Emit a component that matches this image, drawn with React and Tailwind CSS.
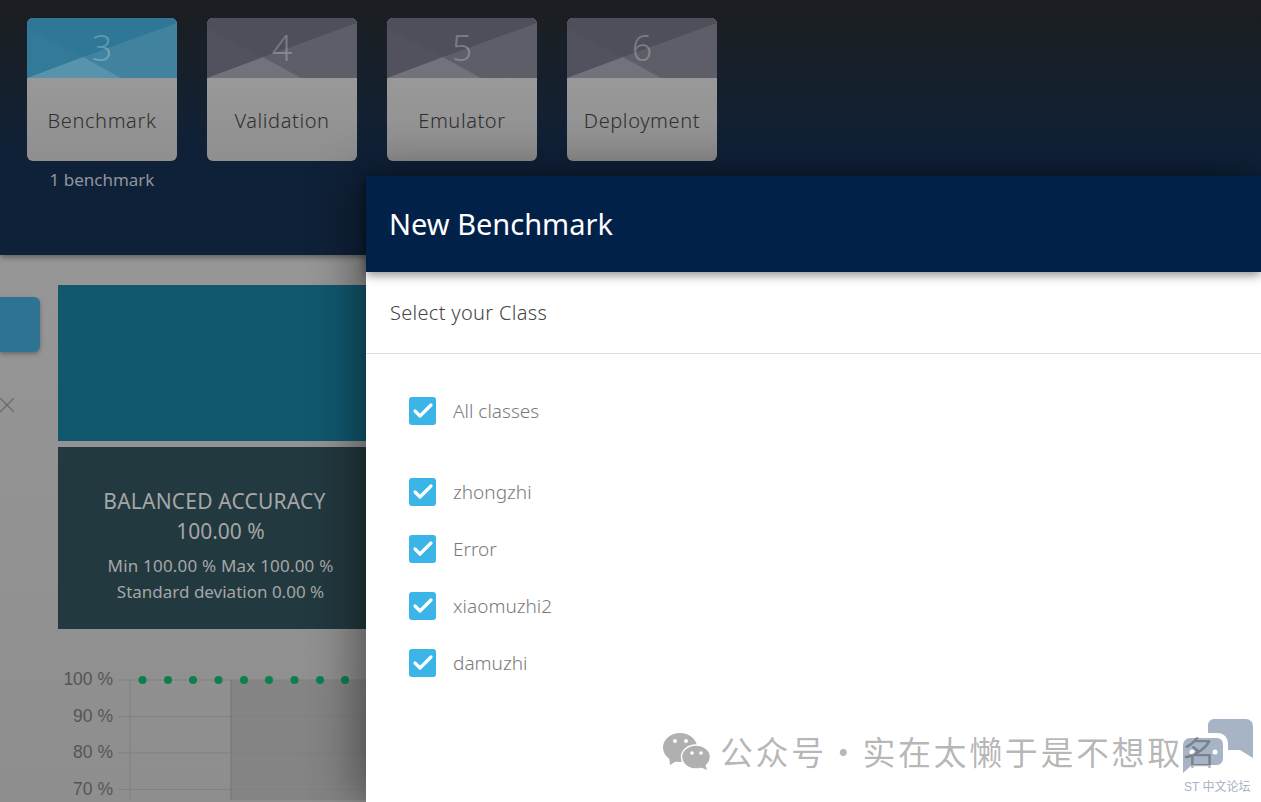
import React from "react";
import { Check, X } from "lucide-react";

const steps = [
  { n: 3, label: "Benchmark", sub: "1 benchmark", active: true },
  { n: 4, label: "Validation" },
  { n: 5, label: "Emulator" },
  { n: 6, label: "Deployment" },
];
const classes = ["zhongzhi", "Error", "xiaomuzhi2", "damuzhi"];
const yTicks = [
  { label: "100 %", y: 680 },
  { label: "90 %", y: 716.5 },
  { label: "80 %", y: 753 },
  { label: "70 %", y: 789.5 },
];
const dots = [142.5, 168, 193, 218.5, 244, 269, 294.5, 320, 345];

const StepCard = ({ step }) => (
  <div className="w-[150px]">
    <div className="h-[143px] rounded-md overflow-hidden bg-gradient-to-b from-[#a0a0a0] to-[#8f8f8f]">
      <div className={`relative h-[60px] ${step.active ? "bg-[#2f7796]" : "bg-[#4e4f5a]"}`}>
        <svg className="absolute inset-0" width="150" height="60" viewBox="0 0 150 60">
          <polygon points="0,10 56,39 0,60" fill="#fff" fillOpacity="0.02" />
          <polygon points="150,5 56,39 94,60 150,60" fill="#fff" fillOpacity="0.09" />
          <polygon points="0,60 56,39 94,60" fill="#fff" fillOpacity="0.2" />
        </svg>
        <div className="relative text-center text-[36px] leading-[60px] font-light text-white/25">{step.n}</div>
      </div>
      <div className="h-[83px] pt-[2px] flex items-center justify-center text-[20px] font-light text-[#2f2f2f] tracking-[0.6px]">
        {step.label}
      </div>
    </div>
    {step.sub && <div className="mt-[9px] text-center text-[17px] leading-5 text-[#8f959d]">{step.sub}</div>}
  </div>
);

const Chart = () => (
  <svg width="320" height="160" viewBox="58 640 320 160" className="mt-[11px] block">
    <rect x="231" y="680" width="150" height="120" fill="#000" fillOpacity="0.07" />
    {yTicks.map((t) => (
      <g key={t.label}>
        <line x1="118" x2="380" y1={t.y} y2={t.y} stroke="#808080" strokeWidth="1" />
        <text x="113" y={t.y + 5} textAnchor="end" fontSize="17.5" fill="#555" fontFamily="'Liberation Sans', sans-serif">
          {t.label}
        </text>
      </g>
    ))}
    <line x1="130" x2="130" y1="680" y2="800" stroke="#808080" />
    <line x1="231" x2="231" y1="680" y2="800" stroke="#747474" />
    {dots.map((x) => (
      <circle key={x} cx={x} cy="680" r="4" fill="#0d7f4f" />
    ))}
  </svg>
);

const ClassRow = ({ label }) => (
  <label className="flex items-center h-[28px] gap-[17px]">
    <span className="w-[27px] h-[28px] rounded-[3px] bg-[#3bb5e8] flex items-center justify-center">
      <Check size={24} color="#fff" strokeWidth={3.2} />
    </span>
    <span className="text-[19px] font-light text-[#7a7a7a]">{label}</span>
  </label>
);

export default function App() {
  return (
    <div className="relative h-[802px] overflow-hidden bg-gradient-to-b from-[#9a9a9a] to-[#8e8e8e] font-['Noto_Sans',sans-serif]">
      <header className="h-[255px] pt-[18px] pl-[27px] flex gap-[30px] bg-gradient-to-b from-[#1c1e20] to-[#0f2138] to-[60%] shadow-[0_2px_6px_rgba(0,0,0,0.4)]">
        {steps.map((s) => (
          <StepCard key={s.n} step={s} />
        ))}
      </header>

      <div className="flex pt-[30px]">
        <div className="w-[58px] shrink-0">
          <div className="mt-[12px] w-[40px] h-[55px] rounded-r-md bg-[#2e7391] shadow-[0_2px_4px_rgba(0,0,0,0.3)]" />
          <X className="mt-[40px] -ml-[6px]" size={26} color="#6a6a6a" strokeWidth={1.2} />
        </div>
        <main className="w-[400px] shrink-0">
          <div className="h-[156px] bg-[#11586f]" />
          <div className="mt-[6px] h-[182px] w-[325px] bg-[#22393f] text-center text-[#a6a6a6] pt-[39px]">
            <div className="pr-[12px] text-[21px] leading-[30px] tracking-[0.2px]">BALANCED ACCURACY</div>
            <div className="text-[21px] leading-[30px]">100.00 %</div>
            <div className="mt-[6px] text-[17px] leading-[27px] tracking-[0.2px]">Min 100.00 % Max 100.00 %</div>
            <div className="-mt-px text-[17px] leading-[27px]">Standard deviation 0.00 %</div>
          </div>
          <Chart />
        </main>
      </div>

      {/* drawer */}
      <aside className="absolute top-[176px] right-0 bottom-0 left-[366px] bg-white rounded-tl-md shadow-[-8px_0_50px_rgba(0,0,0,0.45)]">
        <div className="h-[96px] pl-[23px] flex items-center bg-[#012149] text-white text-[29px] shadow-[0_3px_10px_rgba(0,0,0,0.45)] relative">
          New Benchmark
        </div>
        <div className="h-[82px] pl-[24px] flex items-center border-b border-[#e0e0e0] text-[20px] font-light text-[#444] tracking-[0.3px]">
          Select your Class
        </div>
        <div className="pl-[43px] pt-[43px]">
          <ClassRow label="All classes" />
          <div className="mt-[53px] flex flex-col gap-[29px]">
            {classes.map((c) => (
              <ClassRow key={c} label={c} />
            ))}
          </div>
        </div>
      </aside>

      {/* forum logo */}
      <div className="absolute left-[1183px] top-[719px] text-[#a7b2c2]">
        <svg width="70" height="54" viewBox="0 0 70 54" className="block">
          <path d="M25 6a6 6 0 0 1 6-6h32a7 7 0 0 1 7 7v32L57 31H45V24a10 10 0 0 0-10-10H25z" fill="#a7b4c6" />
          <path d="M7 19h27a6 6 0 0 1 6 6v15a6 6 0 0 1-6 6H9l-9 8V26a7 7 0 0 1 7-7z" fill="#a7b4c6" />
          <circle cx="9" cy="33" r="2.5" fill="#fff" />
          <circle cx="32" cy="33" r="2.5" fill="#fff" />
        </svg>
        <div className="mt-[6px] ml-[1px] text-[12px] leading-4 font-['Liberation_Sans','Noto_Sans_CJK_SC',sans-serif] whitespace-nowrap">ST 中文论坛</div>
      </div>

      {/* watermark */}
      <div className="absolute left-[663px] top-[731px] flex items-center gap-[9px] text-black/30 text-[33px] leading-10 font-['Noto_Sans_CJK_SC',sans-serif] tracking-[2.6px]">
        <svg width="48" height="40" viewBox="0 0 48 40">
          <ellipse cx="17" cy="16.5" rx="17" ry="14.5" fill="#b0b0b0" />
          <polygon points="6,25 7,34 15,29" fill="#b0b0b0" />
          <circle cx="12" cy="10" r="2" fill="#fff" />
          <circle cx="23" cy="10" r="2" fill="#fff" />
          <ellipse cx="33" cy="26" rx="14.5" ry="12" fill="#b0b0b0" stroke="#fff" strokeWidth="1.5" />
          <polygon points="37,36 44,39 42,33" fill="#b0b0b0" />
          <circle cx="29" cy="22" r="1.8" fill="#fff" />
          <circle cx="38" cy="22" r="1.8" fill="#fff" />
        </svg>
        <span>公众号·实在太懒于是不想取名</span>
      </div>
    </div>
  );
}
